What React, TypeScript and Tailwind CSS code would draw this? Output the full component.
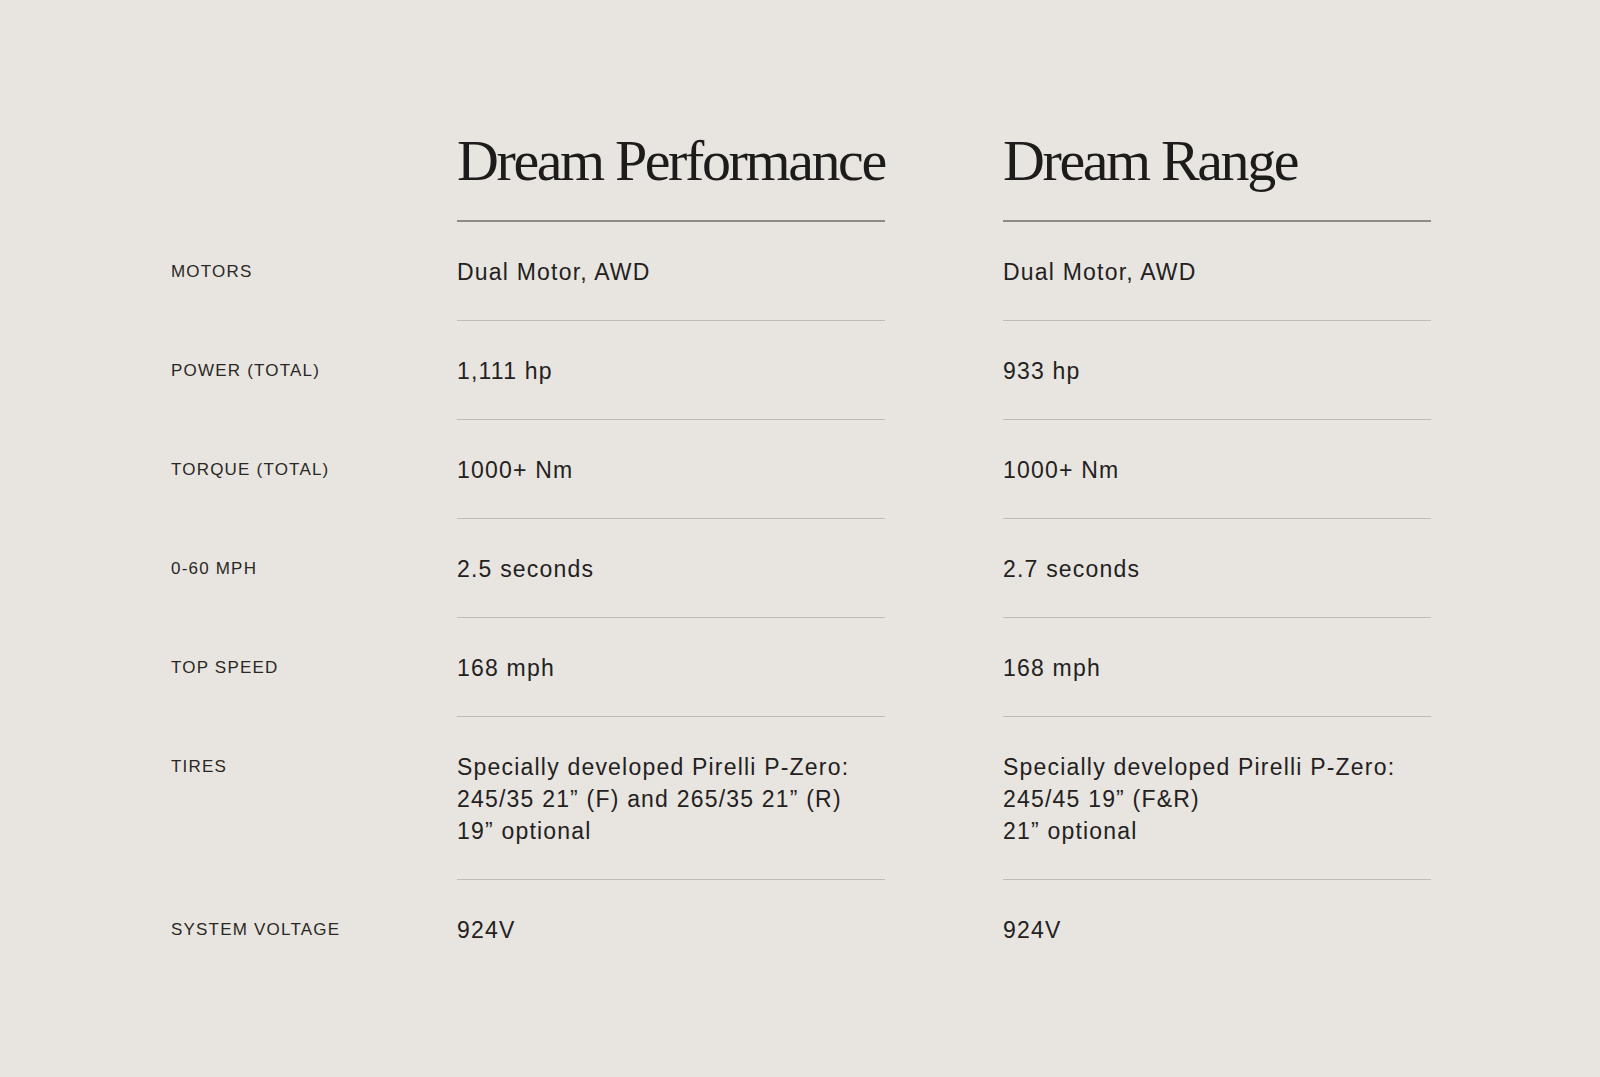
const specs: { label: string; performance: string[]; range: string[] }[] = [
  { label: "MOTORS", performance: ["Dual Motor, AWD"], range: ["Dual Motor, AWD"] },
  { label: "POWER (TOTAL)", performance: ["1,111 hp"], range: ["933 hp"] },
  { label: "TORQUE (TOTAL)", performance: ["1000+ Nm"], range: ["1000+ Nm"] },
  { label: "0-60 MPH", performance: ["2.5 seconds"], range: ["2.7 seconds"] },
  { label: "TOP SPEED", performance: ["168 mph"], range: ["168 mph"] },
  {
    label: "TIRES",
    performance: [
      "Specially developed Pirelli P-Zero:",
      "245/35 21\u201d (F) and 265/35 21\u201d (R)",
      "19\u201d optional",
    ],
    range: ["Specially developed Pirelli P-Zero:", "245/45 19\u201d (F&R)", "21\u201d optional"],
  },
  { label: "SYSTEM VOLTAGE", performance: ["924V"], range: ["924V"] },
]

const sans = "font-['Liberation_Sans',Arial,sans-serif]"

function Value({ lines, last }: { lines: string[]; last: boolean }) {
  return (
    <div
      className={`pt-[34px] pb-[32px] text-[23px] leading-[32px] tracking-[1.2px] whitespace-nowrap text-[#23211e] ${sans} ${
        last ? "" : "border-b border-[#bfbbb5]"
      }`}
    >
      {lines.map((l) => (
        <p key={l}>{l}</p>
      ))}
    </div>
  )
}

export default function App() {
  return (
    <div className="min-h-screen w-full bg-[#e8e5e0] pl-[171px] pt-[132px]">
      <div className="grid grid-cols-[168px_428px_428px] gap-x-[118px]">
        {/* Header row */}
        <div />
        {["Dream Performance", "Dream Range"].map((t) => (
          <h2
            key={t}
            className="whitespace-nowrap border-b-2 border-[#8e8a84] pb-[30px] font-['Liberation_Serif','Times_New_Roman',serif] text-[58px] leading-none tracking-[-2.4px] text-[#1e1c1a]"
          >
            {t}
          </h2>
        ))}

        {/* Spec rows */}
        {specs.map((s, i) => {
          const last = i === specs.length - 1
          return (
            <div key={s.label} className="contents">
              <div
                className={`whitespace-nowrap pt-[34px] text-[17px] leading-[32px] tracking-[1.2px] text-[#2a2825] ${sans}`}
              >
                {s.label}
              </div>
              <Value lines={s.performance} last={last} />
              <Value lines={s.range} last={last} />
            </div>
          )
        })}
      </div>
    </div>
  )
}
